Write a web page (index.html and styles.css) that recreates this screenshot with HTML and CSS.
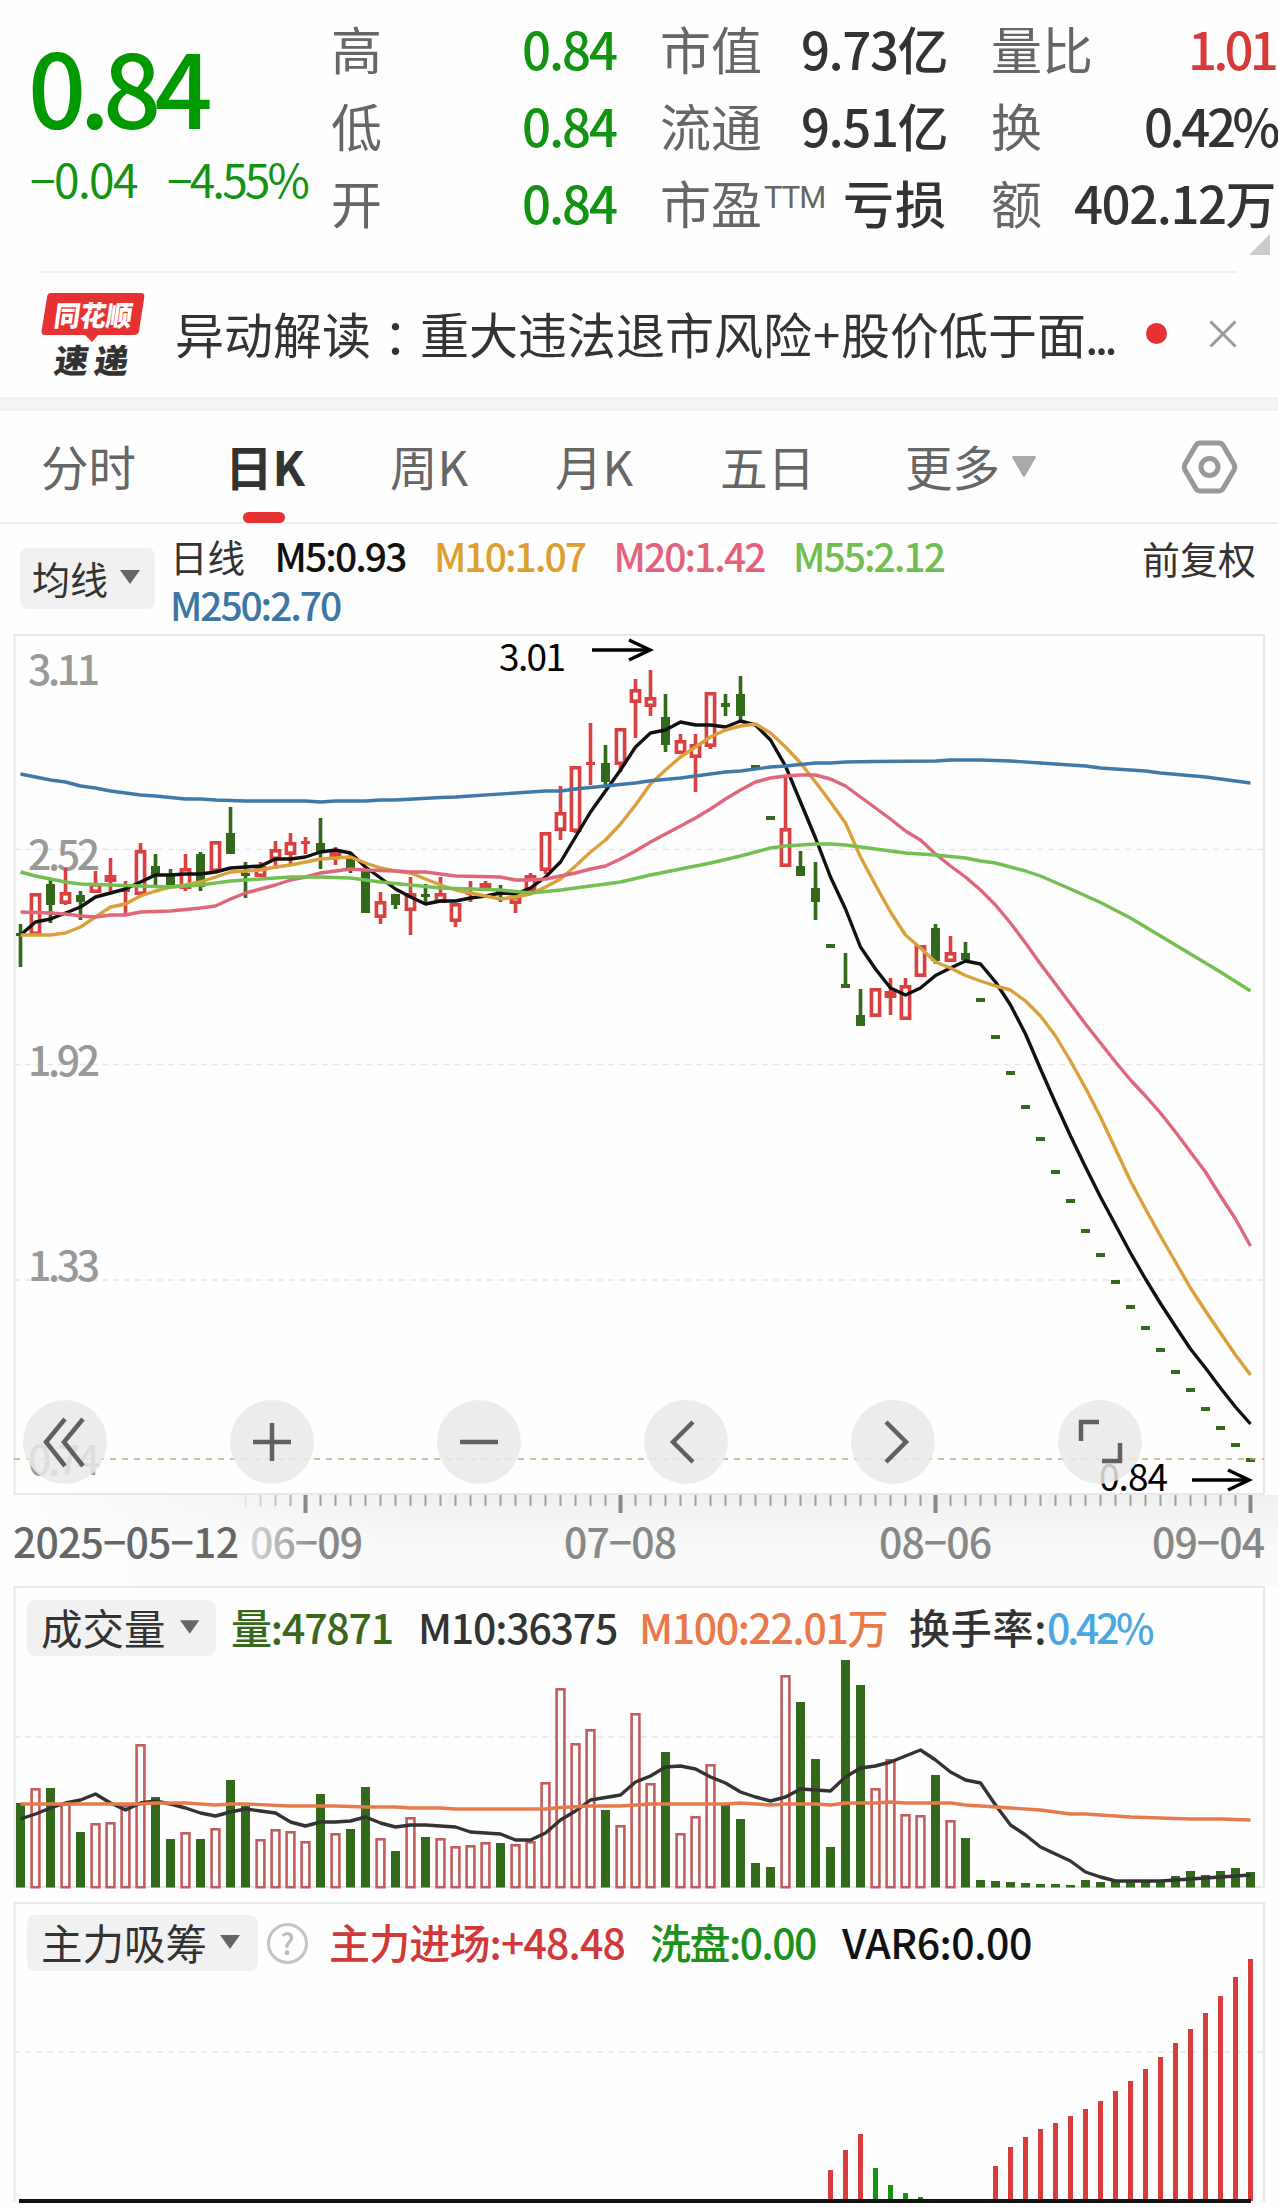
FILE: index.html
```html
<!DOCTYPE html>
<html lang="zh-CN">
<head>
<meta charset="utf-8">
<title>日K</title>
<link rel="stylesheet" href="styles.css">
</head>
<body>
<main class="page">
  <header class="quote">
    <div class="price">
      <div class="last"><span data-w="178">0.84</span></div>
      <div class="change"><span data-w="107">−0.04</span><span data-w="140">−4.55%</span></div>
    </div>
    <dl class="stats">
      <dt>高</dt><dd class="down"><span data-w="94">0.84</span></dd>
      <dt>市值</dt><dd><span data-w="146">9.73亿</span></dd>
      <dt>量比</dt><dd class="up"><span data-w="87">1.01</span></dd>
      <dt>低</dt><dd class="down"><span data-w="94">0.84</span></dd>
      <dt>流通</dt><dd><span data-w="146">9.51亿</span></dd>
      <dt>换</dt><dd class="wide"><span data-w="133">0.42%</span></dd>
      <dt>开</dt><dd class="down"><span data-w="94">0.84</span></dd>
      <dt>市盈<sup>TTM</sup></dt><dd><span data-w="104">亏损</span></dd>
      <dt>额</dt><dd><span data-w="201">402.12万</span></dd>
    </dl>
    <i class="corner"></i>
  </header>

  <section class="news">
    <svg class="logo" viewBox="0 0 104 86">
      <path d="M10 1H100Q104 1 103.300 5L98 39Q97.400 43 93 43H57L51 50L44 43H4Q0 43 .6 39L6 5Q6.600 1 10 1Z" fill="#e63232"/>
      <text x="0" y="0" transform="translate(12 34) skewX(-8)" class="logo-top" textLength="78" lengthAdjust="spacingAndGlyphs">同花顺</text>
      <text x="0" y="0" transform="translate(12 81) skewX(-8)" class="logo-bottom" textLength="34" lengthAdjust="spacingAndGlyphs">速</text>
      <text x="0" y="0" transform="translate(52 81) skewX(-8)" class="logo-bottom" textLength="34" lengthAdjust="spacingAndGlyphs">递</text>
    </svg>
    <p class="headline">异动解读<span class="colon" lang="zh-TW">：</span>重大违法退市风险<span class="plus">+</span>股价低于面<span class="dots">...</span></p>
    <i class="dot"></i>
    <svg class="close" viewBox="0 0 28 28"><path d="M1.500 1.500L26.500 26.500M26.500 1.500L1.500 26.500"/></svg>
  </section>

  <nav class="tabs">
    <a>分时</a><a class="active">日K</a><a>周K</a><a>月K</a><a>五日</a>
    <a class="more">更多<svg viewBox="0 0 26 22"><path d="M2 1H24L13 20Z"/></svg></a>
    <svg class="gear" viewBox="0 0 57 54"><path d="M19 3H38Q41 3 42.500 6L53 24Q54.500 27 53 30L42.500 48Q41 51 38 51H19Q16 51 14.500 48L4 30Q2.500 27 4 24L14.500 6Q16 3 19 3Z"/><ellipse cx="28.500" cy="27" rx="8.500" ry="8.500"/></svg>
  </nav>

  <section class="averages">
    <button class="picker">均线<svg viewBox="0 0 20 14"><path d="M0 0H20L10 14Z"/></svg></button>
    <div class="ma-list">
      <span class="ma-name">日线</span>
      <span class="c-black" data-w="131">M5:0.93</span>
      <span class="c-gold" data-w="151">M10:1.07</span>
      <span class="c-pink" data-w="151">M20:1.42</span>
      <span class="c-lime" data-w="151">M55:2.12</span>
      <span class="c-blue" data-w="170">M250:2.70</span>
    </div>
    <span class="adjust">前复权</span>
  </section>

  <section class="kline">
    <svg id="kline" class="chart" viewBox="0 633 1278 862"></svg>
    <div class="tools">
      <button><svg viewBox="0 0 84 84"><path d="M42 19L23 42L42 66M60 19L41 42L60 66"/></svg></button>
      <button><svg viewBox="0 0 84 84"><path d="M42 23V61M23 42H61"/></svg></button>
      <button><svg viewBox="0 0 84 84"><path d="M23 42H61"/></svg></button>
      <button><svg viewBox="0 0 84 84"><path d="M49 22L29 42L49 62"/></svg></button>
      <button><svg viewBox="0 0 84 84"><path d="M35 22L55 42L35 62"/></svg></button>
      <button><svg viewBox="0 0 84 84"><path d="M23 41V22H41M44 61H62V43"/></svg></button>
    </div>
  </section>

  <section class="timeline"><svg id="timeline" class="chart" viewBox="0 1495 1278 91"></svg></section>

  <section class="panel volume">
    <svg id="volume" class="chart" viewBox="0 1586 1278 315"></svg>
    <div class="legend">
      <button class="picker">成交量<svg viewBox="0 0 20 14"><path d="M0 0H20L10 14Z"/></svg></button>
      <span class="c-leaf" data-w="162">量:47871</span>
      <span class="c-ink" data-w="199">M10:36375</span>
      <span class="c-orange" data-w="248">M100:22.01万</span>
      <span class="c-ink" data-w="138">换手率:</span>
      <span class="c-sky" data-w="104">0.42%</span>
    </div>
  </section>

  <section class="panel force">
    <svg id="force" class="chart" viewBox="0 1901 1278 306"></svg>
    <div class="legend">
      <button class="picker">主力吸筹<svg viewBox="0 0 20 14"><path d="M0 0H20L10 14Z"/></svg></button>
      <i class="help">?</i>
      <span class="c-red" data-w="296">主力进场:+48.48</span>
      <span class="c-green" data-w="166">洗盘:0.00</span>
      <span class="c-black" data-w="190">VAR6:0.00</span>
    </div>
  </section>
</main>
<script src="chart.js"></script>
</body>
</html>
```
FILE: styles.css
```css
* { box-sizing: border-box; margin: 0; padding: 0; }
body { width: 1278px; background: #fff; font-family: "Noto Sans CJK SC", "Noto Sans", sans-serif; color: #333; }
button { border: 0; font: inherit; color: inherit; }
i { font-style: normal; }
.page { width: 1278px; height: 2207px; overflow: hidden; background: #fefefe; }
.chart { display: block; width: 1278px; }

.quote { position: relative; height: 271px; display: flex; padding: 10px 0 0 28px; }
.price { width: 303px; color: #009900; white-space: nowrap; }
.last { font-size: 102px; font-weight: 500; line-height: 110px; margin-top: 20px; }
.change { display: flex; gap: 30px; margin: 8px 0 0 2px; font-size: 46px; line-height: 60px; color: #129312; }
.stats { flex: none; display: grid; grid-template-columns: 100px 185px 203px 128px 130px 198px; grid-auto-rows: 77px; line-height: 77px; font-size: 51px; }
.stats dt { color: #666; white-space: nowrap; }
.stats dt:nth-of-type(3n+2), .stats dt:nth-of-type(3n) { padding-left: 44px; }
.stats dd { display: flex; justify-content: flex-end; font-weight: 500; white-space: nowrap; }
.stats .down { color: #129312; }
.stats .up { color: #d83a3a; }
.stats .wide { margin-right: -2px; }
.stats sup { font-family: Roboto, sans-serif; font-weight: 400; font-size: 31px; line-height: 0; letter-spacing: -1px; vertical-align: 16px; margin-left: 2px; }
.corner { position: absolute; left: 1249px; top: 234px; border-style: solid; border-width: 0 0 21px 21px; border-color: transparent transparent #ccc transparent; }

.news { height: 126px; margin-left: 41px; width: 1196px; border-top: 2px solid #f1f1f1; display: flex; align-items: center; }
.logo { width: 104px; height: 86px; flex: none; overflow: visible; }
.logo-top { font-size: 28px; font-weight: 900; fill: #fff; }
.logo-bottom { font-size: 33px; font-weight: 900; fill: #333; }
.headline { width: 948px; margin-left: 30px; margin-top: -4px; font-size: 49px; line-height: 70px; white-space: nowrap; }
.colon { font-family: "Noto Sans CJK TC", sans-serif; position: relative; top: 3px; }
.plus { display: inline-block; width: 29px; text-indent: 1px; }
.dots { margin-left: -1px; letter-spacing: -4px; }
.dot { width: 21px; height: 21px; border-radius: 50%; background: #e83030; margin-left: 23px; margin-top: -3px; }
.close { width: 28px; height: 28px; margin-left: auto; margin-top: -2px; }
.close path { fill: none; stroke: #999; stroke-width: 3; }

.tabs { height: 127px; border-top: 14px solid #f4f4f4; border-bottom: 2px solid #ededed; display: flex; font-size: 47.500px; line-height: 110px; color: #666; padding-left: 41px; }
.tabs a { width: 165px; white-space: nowrap; }
.tabs a:first-child { width: 184px; }
.tabs .active { position: relative; font-weight: 700; color: #333; }
.tabs .active::after { content: ""; position: absolute; left: 18px; top: 101px; width: 42px; height: 11px; border-radius: 5.500px; background: #e63232; }
.tabs a:nth-child(5) { width: 185px; }
.tabs .more { width: 276px; }
.more svg { width: 26px; height: 22px; margin-left: 11px; vertical-align: 8px; }
.more path { fill: #aaa; stroke: #aaa; stroke-width: 2; stroke-linejoin: round; }
.gear { width: 57px; height: 54px; margin-top: 29px; }
.gear path, .gear ellipse { fill: none; stroke: #999; stroke-width: 5; }

.averages { height: 109px; display: flex; align-items: flex-start; padding-left: 20px; }
.picker { display: flex; align-items: center; background: #f1f1f1; border-radius: 8px; }
.picker svg { width: 20px; height: 14px; }
.picker path { fill: #666; }
.averages .picker { width: 135px; height: 61px; margin-top: 24px; padding: 0 0 3px 12px; font-size: 38px; gap: 12px; }
.ma-list { width: 950px; display: flex; flex-wrap: wrap; padding: 7px 0 0 15px; font-size: 39px; font-weight: 500; line-height: 49px; column-gap: 28.500px; }
.ma-list span { white-space: nowrap; }
.ma-list .ma-name { width: 76px; font-size: 37.500px; font-weight: 400; }
.adjust { margin-left: 37px; margin-top: 9px; font-size: 38px; line-height: 49px; white-space: nowrap; }

.c-black { color: #111; } .c-gold { color: #dd9f30; } .c-pink { color: #e3627a; }
.c-lime { color: #70bd50; } .c-blue { color: #3b76a5; } .c-leaf { color: #38681a; }
.c-ink { color: #333; } .c-orange { color: #e9794a; } .c-sky { color: #4aa7e2; }
.c-red { color: #d23838; } .c-green { color: #1c911c; }

.kline { position: relative; height: 862px; }
.tools { position: absolute; left: 23px; top: 767px; width: 1119px; display: flex; justify-content: space-between; }
.tools button { width: 84px; height: 84px; border-radius: 50%; background: rgba(233, 233, 233, .85); }
.tools svg { display: block; }
.tools path { fill: none; stroke: #606060; stroke-width: 4.500; }

.timeline { height: 91px; background: linear-gradient(90deg, #fefefe 0, rgba(254,254,254,.3) 260px, rgba(254,254,254,0) 420px), linear-gradient(#f0f0f0, #fafafa 65%); }
.panel { position: relative; }
.volume { height: 315px; }
.force { height: 306px; }
.legend { position: absolute; left: 27px; top: 14px; display: flex; align-items: center; height: 56px; font-size: 41px; font-weight: 500; white-space: nowrap; }
.legend > span, .legend .picker { line-height: 56px; }
.legend > span { position: relative; top: -2px; margin-right: 25px; }
.legend .picker { width: 189px; height: 56px; padding: 0 17px 2px 14px; gap: 14px; margin-right: 15px; font-size: 41.500px; font-weight: 400; }
.volume .legend > span:nth-of-type(2) { margin-right: 22px; }
.volume .legend > span:nth-of-type(3) { margin-right: 22px; }
.volume .legend > span:nth-of-type(4) { margin-right: 0; }
.force .legend .picker { width: 231px; margin-right: 9px; gap: 13px; }
.force .legend > span:nth-of-type(2) { margin-right: 26px; }
.help { width: 41px; height: 41px; margin-right: 21px; border: 3px solid #c4c4c4; border-radius: 50%; color: #bbb; font-size: 29px; line-height: 33px; text-align: center; }

.axis-text { font-size: 41px; fill: #999; font-weight: 500; }
.mark-text { font-size: 37px; fill: #000; font-weight: 400; }
.date-text { font-size: 41px; fill: #888; font-weight: 500; }
.date-text.first { fill: #666; }
```
FILE: chart.js
```js
// Letter spacing makes each figure as wide as its slot.
document.querySelectorAll('[data-w]').forEach(el => {
  const w = el.getBoundingClientRect().width;
  el.style.letterSpacing = ((+el.dataset.w - w) / el.textContent.length).toFixed(2) + 'px';
});

const X0 = 20.5, STEP = 15;
const x = i => X0 + STEP * i;
const RED = '#d94040', GREEN = '#33691a';
const rect = (l, t, w, h, fill) => `<rect x="${l}" y="${t}" width="${w}" height="${h}" fill="${fill}"/>`;
const box = (l, t, w, h, c, s) => `<rect x="${l + s / 2}" y="${t + s / 2}" width="${w - s}" height="${Math.max(h - s, .5)}" fill="#fff" stroke="${c}" stroke-width="${s}"/>`;
const line = (x1, y1, x2, y2, c, w, extra = '') => `<path d="M${x1} ${y1}L${x2} ${y2}" stroke="${c}" stroke-width="${w}" fill="none" ${extra}/>`;
const curve = (s, c, w) => {
  const pts = s.trim().split(/\s+/).map(p => { const [i, y] = p.split(':'); return x(+i) + ',' + y; });
  return `<polyline points="${pts.join(' ')}" fill="none" stroke="${c}" stroke-width="${w}" stroke-linejoin="round"/>`;
};
const series = s => s.trim().split(/\s+/).map((y, i) => i + ':' + y).join(' ');
const text = (l, base, w, cls, s, extra = '') => `<text x="${l}" y="${base}" class="${cls}" textLength="${w}" ${extra}>${s}</text>`;
const frame = (t, b) => `<path d="M14.500 ${b}V${t}H1264V${b}" fill="none" stroke="#e8e8e8" stroke-width="2"/>`;

// direction, high, body top, body bottom, low
const candles = `g 924 933 936 967|r 893 893 935 935|g 878 884 905 923|r 868 892 904 905|g 891 895 902 920|r 871 883 893 893|r 858 875 882 892|r 881 889 892 915|r 843 850 895 897|g 854 866 875 885
g 869 874 885 885|r 854 868 889 891|g 852 854 887 891|r 841 841 872 872|g 807 833 854 854|g 862 873 876 898|r 862 866 877 877|r 841 849 860 869|r 833 842 855 864|r 837 841 844 854
g 818 843 852 869|r 847 850 857 865|g 852 857 871 873|g 870 870 913 913|r 892 901 918 924|g 894 894 905 909|r 877 893 911 935|g 884 894 897 903|r 877 893 903 903|r 903 903 922 927
r 881 892 895 902|r 881 883 889 889|g 885 889 892 902|r 896 896 904 913|r 873 875 891 891|r 832 832 871 874|r 786 812 831 840|r 766 766 832 833|r 723 762 765 785|g 745 763 782 788
r 728 728 765 772|r 679 689 703 738|r 670 697 707 716|g 694 717 745 752|r 734 740 754 754|r 734 744 758 792|r 692 692 747 749|g 694 703 707 716|g 676 694 716 720|g 765 765 769 769
g 816 816 820 820|r 777 828 867 867|g 851 866 876 876|g 862 888 902 920|g 944 944 948 948|g 953 984 988 988|g 989 1015 1026 1026|r 988 988 1017 1017|r 978 991 998 1015|r 978 985 1020 1020
r 945 945 977 977|g 924 928 961 964|r 936 952 962 962|g 942 953 960 960`.split(/[|\n]/).map(r => r.split(' '));
[1000, 1037, 1073, 1107, 1139, 1172, 1201, 1231, 1255, 1282, 1307, 1328, 1350, 1372, 1390, 1409, 1428, 1445, 1460]
  .forEach(y => candles.push(['g', y - 2, y - 2, y + 2, y + 2]));

const grid = (y, c = '#e6e6e6', d = '6 5') => line(14, y, 1264, y, c, 1.500, `stroke-dasharray="${d}"`);
let k = frame(635, 1494) + line(14, 1494, 1264, 1494, '#e8e8e8', 2) + grid(849.500) + grid(1064.500) + grid(1280);
[['3.11', 685], ['2.52', 870], ['1.92', 1076], ['1.33', 1281], ['0.74', 1475]].forEach(([s, y]) => k += text(28, y, 72, 'axis-text', s));
candles.forEach(([d, hi, t, b, lo], i) => {
  const c = d === 'r' ? RED : GREEN;
  hi = +hi; t = +t; b = +b; lo = +lo;
  if (lo > hi && !(hi === t && lo === b)) k += rect(x(i) - 1.800, hi, 3.600, lo - hi, c);
  if (d === 'g') k += rect(x(i) - 4.500, t, 9, b - t, c);
  else if (b - t < 5) k += rect(x(i) - 4.500, t, 9, b - t, c);
  else k += box(x(i) - 5.900, t, 11.800, b - t, c, 3.600);
});
k += grid(1459, '#c4ab78', '6 6');
k += curve(series(`935 922 919 913 907 897 893 889 882 875 875 874 874 872 868 867 866 859 859 857 852 850 853 867 878 889 897 904 901 901 898 896 893 894 888 877 862 837 812 791 770 747 733 730 722 725 725 727 721 725 740 766 802 838 877 909 947 969 988 995 988 975.500 968 961 964 982 1005 1034 1069 1103 1136 1167 1197 1225 1253 1279 1303.500 1326.500 1349 1368 1388 1407 1424`), '#111', 3.400);
k += curve(series(`935 935 935 933 927 917 907 904 896 891 887 885 882 877 872 871 870 867 865 862 859 858 857 863 868 871 873 879 885 890 893 896 899 897 894 887 879 866 852 840 824 805 784 770 757 747 737 730 726 724 733 747 763 782 802 823 857 885 912 935 948 962 968 975.500 981 986 990 1001 1016 1036 1061 1088 1117 1149 1181 1209 1236 1262 1288 1311 1333 1355 1375`), '#dba03a', 3.400);
k += curve(`0:912 2:913 3:914 4:916 5:917 6:915 7:915 8:912 10:911 12:908 13:906 14:899 15:893 16:889 17:885 18:880 19:877 20:873 21:871 22:869 23:870 25:871 26:872 27:872 28:874 29:876 32:877 33:880 34:880 35:879 36:876 37:873 38:869 39:866 40:859 41:851 42:842 43:834 44:826 45:818 46:809 47:799 48:790 49:782 50:778 51:776 52:775 53:775 54:779 55:786 56:797 57:808 58:819 59:831 60:840 61:854 62:866 63:877 64:890 65:905 66:923 67:943 68:964 69:984 70:1004 71:1024 72:1043 73:1062 74:1080 75:1096 76:1113 77:1132 78:1152 79:1172 80:1196 81:1219 82:1246`, '#e0667a', 3.400);
k += curve(`0:872 1:876 2:879 3:882 4:884 6:885 8:886 10:887 12:885 13:883 14:881 16:879 18:877 20:877 22:878 24:882 26:885 28:888 30:889 32:890 34:893 36:890 38:886 40:882 42:875 44:869 46:863 48:856 50:848 51:846 53:844 54:844 55:845 57:849 59:853 61:855 63:858 64:861 65:863 66:867 67:871 68:876 70:889 72:902.500 74:918 76:936 78:954 80:972 82:991`, '#73bf52', 3.400);
k += curve(`0:774 1:777 2:780 3:782 4:786 5:788 6:791 8:795 9:796 11:799 12:799 13:800 15:801 19:801 20:802 21:801 23:801 24:800 25:800 28:797.500 29:797 35:791 36:791 37:789 39:786 41:783 42:780.700 44:778 47:772 48:771 50:767 51:766 53:763 54:763 55:762 57:761.500 61:761 62:760 64:760 66:761 68:763 71:766 72:768 75:771 76:773 79:777 82:783`, '#4079a8', 3.400);
const arrow = (x1, x2, y, c = '#000') => line(x1, y, x2, y, c, 3.500) + `<path d="M${x2 - 21} ${y - 10}L${x2} ${y}L${x2 - 21} ${y + 10}" fill="none" stroke="${c}" stroke-width="3.500"/>`;
k += text(499, 671, 67, 'mark-text', '3.01') + arrow(592, 650, 650);
k += text(1099, 1491, 69, 'mark-text', '0.84') + arrow(1192, 1249, 1480);
document.getElementById('kline').innerHTML = k;

let a = '<defs><linearGradient id="fade" gradientUnits="userSpaceOnUse" x1="235" x2="320" y1="0" y2="0"><stop stop-color="#888" stop-opacity=".15"/><stop offset="1" stop-color="#888"/></linearGradient></defs>';
for (let i = 15; i <= 82; i++) {
  const major = [19, 40, 61, 82].includes(i);
  a += `<g opacity="${i < 19 ? (i - 14) / 5 : 1}">` + rect(x(i) - (major ? 2 : 1), 1495, major ? 4 : 2, major ? 18 : 11, major ? '#888' : '#a0a0a0') + '</g>';
}
a += text(13, 1558, 226, 'date-text first', '2025−05−12') + text(250, 1558, 113, 'date-text', '06−09', 'style="fill:url(#fade)"')
  + text(564, 1558, 113, 'date-text', '07−08') + text(879, 1558, 113, 'date-text', '08−06') + text(1152, 1558, 113, 'date-text', '09−04');
document.getElementById('timeline').innerHTML = a;

const vol = `g1803 r1788 g1788 r1803 g1832 r1823 r1822 r1805 r1744 g1797 g1839 r1832 g1839 r1828 g1780 g1806 r1839 r1829 r1831 r1841 g1794 r1833 g1829 g1787 r1838 g1851 r1817 g1837 r1838 r1846 r1845 r1842 g1843 r1844 r1841 r1782 r1688 r1743 r1729 g1810 r1825 r1713 r1783 g1752 r1833 r1816 r1764 g1803 g1819 g1863 g1867 r1675 g1702 g1759 g1847 g1660 g1685 r1788 r1759 r1814 r1815 g1775 r1820 g1838 g1880 g1881 g1882 g1883 g1884 g1884 g1885 g1880 g1882 g1882 g1882 g1882 g1881 g1876 g1871 g1875 g1871 g1868 g1872`.split(' ');
let v = frame(1587, 1887) + line(14, 1887, 1264, 1887, '#e8e8e8', 2) + grid(1737);
vol.forEach((s, i) => {
  const y = +s.slice(1);
  v += s[0] === 'r' ? box(x(i) - 5.200, y, 10.400, 1888.500 - y, '#c45c5c', 2.600) : rect(x(i) - 4.500, y, 9, 1887.500 - y, '#33691a');
});
v += curve(`0:1819 1:1814 2:1808 3:1803 4:1800 5:1794 6:1803 7:1810 8:1803 9:1801 10:1804 11:1808 12:1813 13:1816 14:1812 15:1809 16:1811 17:1813 18:1822 19:1826 20:1822 21:1822 22:1821 23:1817 24:1823 25:1827 26:1825 27:1825 28:1826 29:1827 30:1832 32:1834 33:1840 34:1840 35:1833 36:1820 37:1811 38:1800 40:1795 41:1782 42:1776 43:1767 44:1766 45:1769 46:1777 47:1783 48:1792 49:1797 50:1801 51:1797 52:1789 53:1790 54:1791 55:1777 56:1768 57:1766 58:1762 59:1756 60:1750 61:1760 62:1772 63:1780 64:1783 65:1805 66:1825 67:1835 68:1847 69:1854 70:1861 71:1872 72:1877 73:1881 76:1881 82:1875`, '#333', 3.400);
v += curve(`0:1804 8:1804 9:1803 11:1803 13:1805 14:1804 15:1804 18:1806 21:1806 23:1807 25:1807 26:1808 28:1808 29:1809 35:1809 36:1807.500 38:1806 40:1806 42:1804 47:1804 48:1803 50:1805 51:1804 53:1804 54:1805 55:1803 57:1803 58:1802 59:1803 62:1803 63:1805 65:1807 68:1810 70:1814 71:1814 74:1817 78:1819 80:1819 82:1820`, '#e67a4c', 3.400);
document.getElementById('volume').innerHTML = v;

let f = frame(1903, 2202) + grid(2052);
const bars = { 54: 2170, 55: 2150, 56: 2134, 57: 2168, 58: 2185, 59: 2193, 60: 2197, 65: 2166, 66: 2147, 67: 2137, 68: 2129, 69: 2123, 70: 2116, 71: 2109, 72: 2101, 73: 2091, 74: 2081, 75: 2069, 76: 2057, 77: 2043, 78: 2029, 79: 2013, 80: 1996, 81: 1977, 82: 1959 };
for (const i in bars) f += rect(x(+i) - 2.500, bars[i], 5, 2201 - bars[i], i >= 57 && i <= 60 ? '#129312' : '#d93c3c');
f += line(19, 2201, 1251, 2201, '#111', 4);
document.getElementById('force').innerHTML = f;
```
